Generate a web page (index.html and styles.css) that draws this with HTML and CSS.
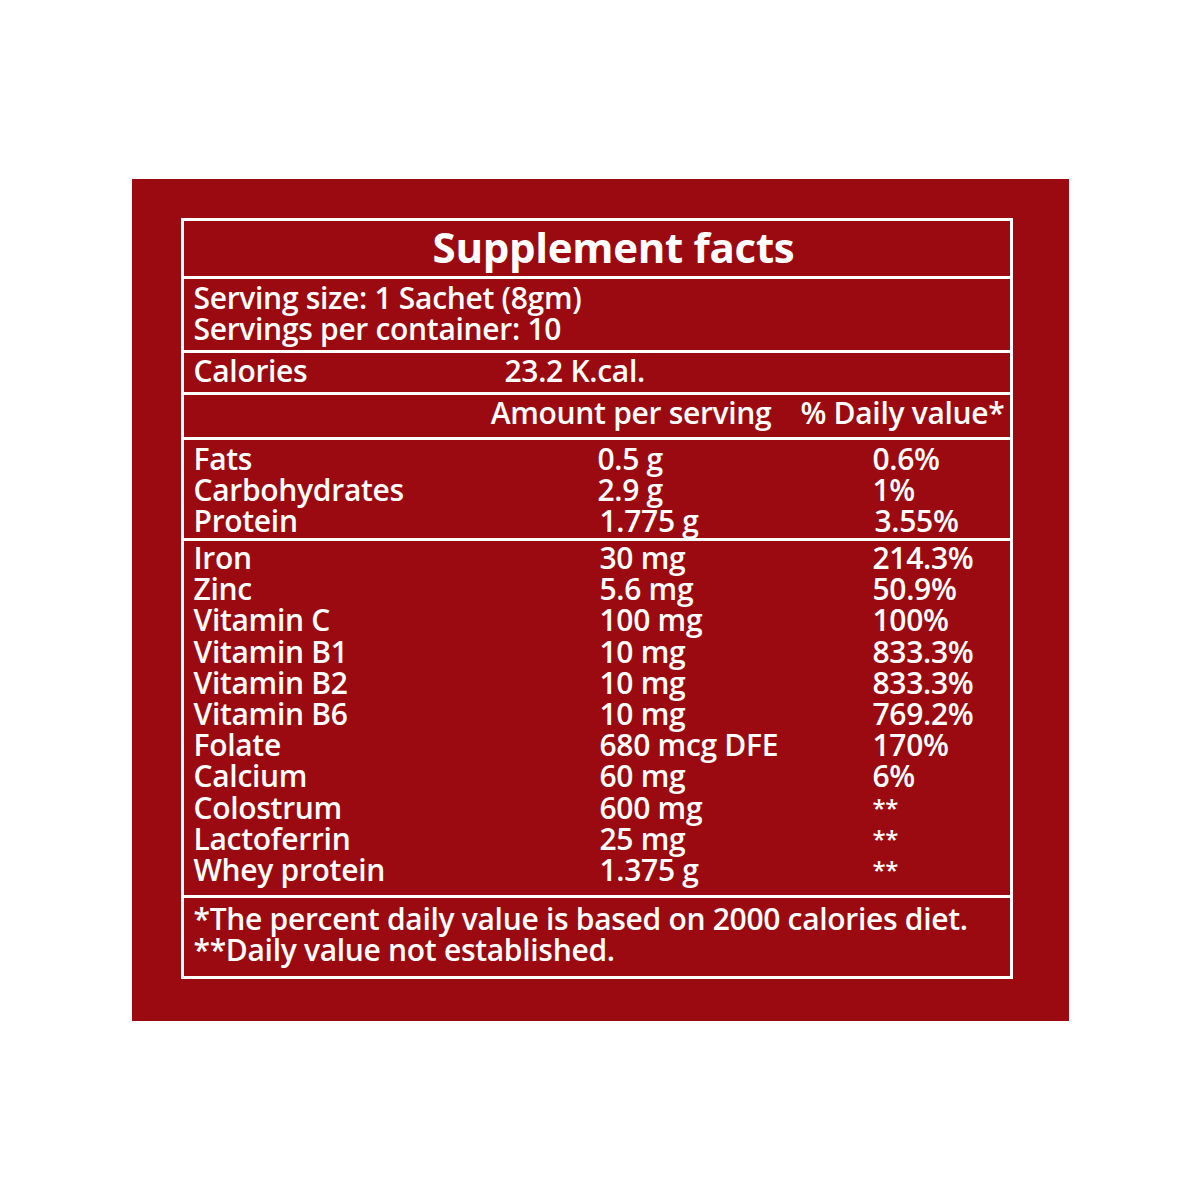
FILE: index.html
```html
<!DOCTYPE html>
<html lang="en">

<head>
  <meta charset="UTF-8">
  <meta name="viewport" content="width=device-width, initial-scale=1.0">
  <title>Supplement Facts</title>
  <link rel="stylesheet" href="styles.css">
</head>

<body>
  <div class="panel">
    <div class="facts">
      <div class="row title">Supplement facts</div>

      <div class="row serving">
        <div>Serving size: 1 Sachet (8gm)</div>
        <div>Servings per container: 10</div>
      </div>

      <div class="row calories">
        <span class="cal-label">Calories</span>
        <span>23.2 K.cal.</span>
      </div>

      <div class="row head">
        <span>Amount per serving</span>
        <span>% Daily value*</span>
      </div>

      <div class="row grid macros">
        <span>Fats</span><span>0.5 g</span><span>0.6%</span>
        <span>Carbohydrates</span><span>2.9 g</span><span>1%</span>
        <span>Protein</span><span class="nudge">1.775 g</span><span class="nudge">3.55%</span>
      </div>

      <div class="row grid minerals">
        <span>Iron</span><span class="nudge">30 mg</span><span>214.3%</span>
        <span>Zinc</span><span class="nudge">5.6 mg</span><span>50.9%</span>
        <span>Vitamin C</span><span class="nudge">100 mg</span><span>100%</span>
        <span>Vitamin B1</span><span class="nudge">10 mg</span><span>833.3%</span>
        <span>Vitamin B2</span><span class="nudge">10 mg</span><span>833.3%</span>
        <span>Vitamin B6</span><span class="nudge">10 mg</span><span>769.2%</span>
        <span>Folate</span><span class="nudge">680 mcg DFE</span><span>170%</span>
        <span>Calcium</span><span class="nudge">60 mg</span><span>6%</span>
        <span>Colostrum</span><span class="nudge">600 mg</span><span class="stars">**</span>
        <span>Lactoferrin</span><span class="nudge">25 mg</span><span class="stars">**</span>
        <span>Whey protein</span><span class="nudge">1.375 g</span><span class="stars">**</span>
      </div>

      <div class="row notes">
        <div>*The percent daily value is based on 2000 calories diet.</div>
        <div>**Daily value not established.</div>
      </div>
    </div>
  </div>
</body>

</html>
```

FILE: styles.css
```css
body {
  margin: 0;
  padding: 0;
  background-color: #ffffff;
  font-family: "Open Sans", "Liberation Sans", sans-serif;
}

.panel {
  width: 937px;
  height: 842px;
  margin: 179px auto 0;
  box-sizing: border-box;
  padding: 39px 56px 0 49px;
  background-color: #9b0a10;
}

.facts {
  width: 832px;
  border: 3px solid #ffffff;
  box-sizing: border-box;
  color: #ffffff;
  font-size: 30px;
  font-weight: 600;
  line-height: 31px;
  letter-spacing: -0.3px;
}

.row {
  box-sizing: border-box;
  border-bottom: 3px solid #ffffff;
  padding-left: 10px;
}

.row:last-child {
  border-bottom: none;
}

.title {
  height: 58px;
  line-height: 52px;
  padding-left: 34px;
  text-align: center;
  font-size: 42px;
  font-weight: 700;
}

.serving {
  height: 74px;
  padding-top: 3px;
}

.calories {
  height: 42px;
  padding-top: 2px;
  display: flex;
}

.cal-label {
  width: 311px;
}

.head {
  height: 45px;
  padding-top: 2px;
  padding-right: 5px;
  display: flex;
  justify-content: flex-end;
  gap: 29px;
}

.grid {
  display: grid;
  grid-template-columns: 404px 275px 1fr;
  grid-auto-rows: 31px;
  align-content: start;
}

.macros {
  height: 101px;
  padding-top: 3px;
}

.minerals {
  height: 357px;
  padding-top: 1px;
  grid-auto-rows: 31.2px;
}

.nudge {
  margin-left: 2px;
}

.stars {
  font-size: 24px;
}

.notes {
  height: 78px;
  padding-top: 5px;
}
```
